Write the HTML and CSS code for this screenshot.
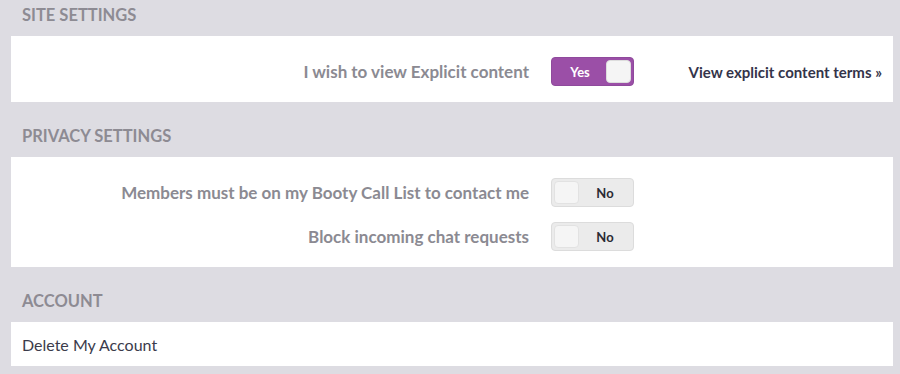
FILE: index.html
```html
<!DOCTYPE html>
<html lang="en">
<head>
    <meta charset="utf-8" />
    <meta name="viewport" content="width=device-width, initial-scale=1.0" />
    <title>Settings</title>
    <link rel="stylesheet" href="styles.css">
</head>
<body>
    <div class="settings">
        <h2 class="section-title">Site Settings</h2>
        <div class="panel">
            <div class="row">
                <span class="label">I wish to view Explicit content</span>
                <button class="toggle on"><span class="toggle-text">Yes</span><span class="knob"></span></button>
                <a class="terms" href="#">View explicit content terms &raquo;</a>
            </div>
        </div>

        <h2 class="section-title">Privacy Settings</h2>
        <div class="panel">
            <div class="row">
                <span class="label">Members must be on my Booty Call List to contact me</span>
                <button class="toggle"><span class="knob"></span><span class="toggle-text">No</span></button>
                <span class="spacer"></span>
            </div>
            <div class="row">
                <span class="label">Block incoming chat requests</span>
                <button class="toggle"><span class="knob"></span><span class="toggle-text">No</span></button>
                <span class="spacer"></span>
            </div>
        </div>

        <h2 class="section-title">Account</h2>
        <div class="panel plain">
            <a class="delete" href="#">Delete My Account</a>
        </div>
    </div>
</body>
</html>
```

FILE: styles.css
```css
body {
    font-family: 'Lato', 'Noto Sans', sans-serif;
    margin: 0;
    padding: 0;
    background-color: #dddce2;
    color: #3b3b4b;
}

.settings {
    padding: 0 7px 7px 11px;
}

.section-title {
    margin: 19px 0 0;
    padding: 5px 11px 11px;
    font-size: 16.5px;
    line-height: 20px;
    font-weight: bold;
    text-transform: uppercase;
    color: #8d8b93;
}

.section-title:first-child {
    margin-top: 0;
}

.panel {
    background-color: #fff;
    padding: 21px 0 16px;
    display: flex;
    flex-direction: column;
    gap: 15px;
}

.panel.plain {
    padding: 0 11px;
    height: 44px;
    justify-content: center;
}

.row {
    display: grid;
    grid-template-columns: 1fr 83px 237px;
    align-items: center;
    column-gap: 22px;
    height: 29px;
}

.row .label {
    text-align: right;
    font-weight: bold;
    font-size: 17px;
    color: #8b8a92;
}

.toggle {
    display: flex;
    align-items: center;
    width: 83px;
    height: 29px;
    padding: 2px;
    border: 1px solid #dcdcdc;
    border-radius: 4px;
    background-color: #ebebeb;
    font-family: inherit;
    cursor: pointer;
    box-sizing: border-box;
}

.toggle .knob {
    width: 25px;
    height: 23px;
    border-radius: 4px;
    background-color: #f5f5f5;
    border: 1px solid #e2e2e2;
    box-sizing: border-box;
}

.toggle .toggle-text {
    flex: 1;
    text-align: center;
    font-size: 13px;
    font-weight: bold;
    color: #2a2a33;
}

.toggle.on {
    background-color: #9b4fa7;
    border-color: #8f4a9c;
}

.toggle.on .toggle-text {
    color: #fff;
}

.toggle.on .knob {
    border-color: #ddd;
}

.terms {
    text-align: right;
    padding-right: 11px;
    font-size: 15px;
    font-weight: bold;
    color: #34344a;
    text-decoration: none;
}

.delete {
    font-size: 16px;
    color: #3b3b4b;
    text-decoration: none;
}
```
